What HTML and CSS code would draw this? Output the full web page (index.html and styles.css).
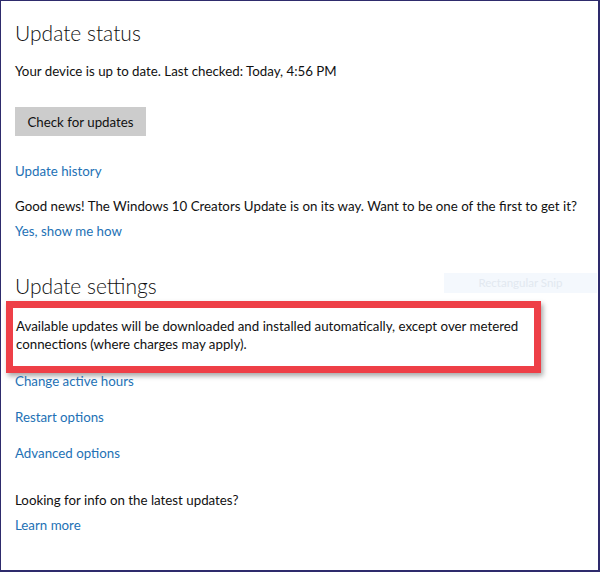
FILE: index.html
```html
<!DOCTYPE html>
<html>
<head>
<meta charset="utf-8">
<link rel="stylesheet" href="styles.css">
</head>
<body>
<div class="frame">
  <h1 class="heading h-status">Update status</h1>
  <p class="text t-device">Your device is up to date. Last checked: Today, 4:56 PM</p>
  <div class="btn-row"><button class="btn">Check for updates</button></div>
  <a class="link l-history">Update history</a>
  <p class="text t-news">Good news! The Windows 10 Creators Update is on its way. Want to be one of the first to get it?</p>
  <a class="link l-yes">Yes, show me how</a>
  <h2 class="heading h-settings">Update settings</h2>
  <div class="highlight">
    <p class="hl-text">Available updates will be downloaded and installed automatically, except over metered connections (where charges may apply).</p>
  </div>
  <a class="link l-hours">Change active hours</a>
  <a class="link l-restart">Restart options</a>
  <a class="link l-advanced">Advanced options</a>
  <p class="text t-looking">Looking for info on the latest updates?</p>
  <a class="link l-learn">Learn more</a>
  <div class="snip">Rectangular Snip</div>
</div>
</body>
</html>
```

FILE: styles.css
```css
html, body {
  margin: 0;
  padding: 0;
  background: #fff;
}
.frame {
  position: relative;
  width: 600px;
  height: 572px;
  box-sizing: border-box;
  border: 2px solid #2e2b6c;
  border-top-width: 1px;
  border-left-width: 1px;
  padding-left: 14px;
  font-family: Lato, "Noto Sans", sans-serif;
  font-size: 13.3px;
  color: #111;
  display: flex;
  flex-direction: column;
  align-items: flex-start;
}
.heading {
  margin: 0;
  font-weight: 300;
  font-size: 21px;
  line-height: 30px;
  color: #111;
}
.h-status { margin-top: 17px; }
.text {
  margin: 0;
  line-height: 20px;
  white-space: nowrap;
}
.link {
  display: block;
  line-height: 20px;
  color: #2371b5;
  cursor: pointer;
}
.t-device { margin-top: 13px; }
.btn-row { margin-top: 26px; }
.btn {
  font-family: inherit;
  font-size: 13.3px;
  color: #111;
  background: #cccccc;
  border: 0;
  height: 29px;
  width: 131px;
  padding: 0;
  margin: 0;
  display: block;
}
.l-history { margin-top: 25px; }
.t-news { margin-top: 15px; }
.l-yes { margin-top: 5px; }
.h-settings { margin-top: 30px; }
.highlight {
  margin-top: 0;
  margin-left: -9px;
  width: 535px;
  box-sizing: border-box;
  border: 7px solid #ee3f47;
  padding: 9px 0 13px 3px;
  background: #fff;
  box-shadow: 2px 3px 5px rgba(0, 0, 0, 0.35);
}
.hl-text {
  margin: 0;
  line-height: 18px;
  width: 515px;
}
.l-hours { margin-top: -2px; }
.l-restart { margin-top: 16px; }
.l-advanced { margin-top: 16px; }
.t-looking { margin-top: 27px; }
.l-learn { margin-top: 5px; }
.snip {
  position: absolute;
  left: 443px;
  top: 272px;
  width: 153px;
  height: 20px;
  background: #f4f8fd;
  color: #e2e8f0;
  font-size: 11.5px;
  line-height: 20px;
  text-align: center;
}
```
